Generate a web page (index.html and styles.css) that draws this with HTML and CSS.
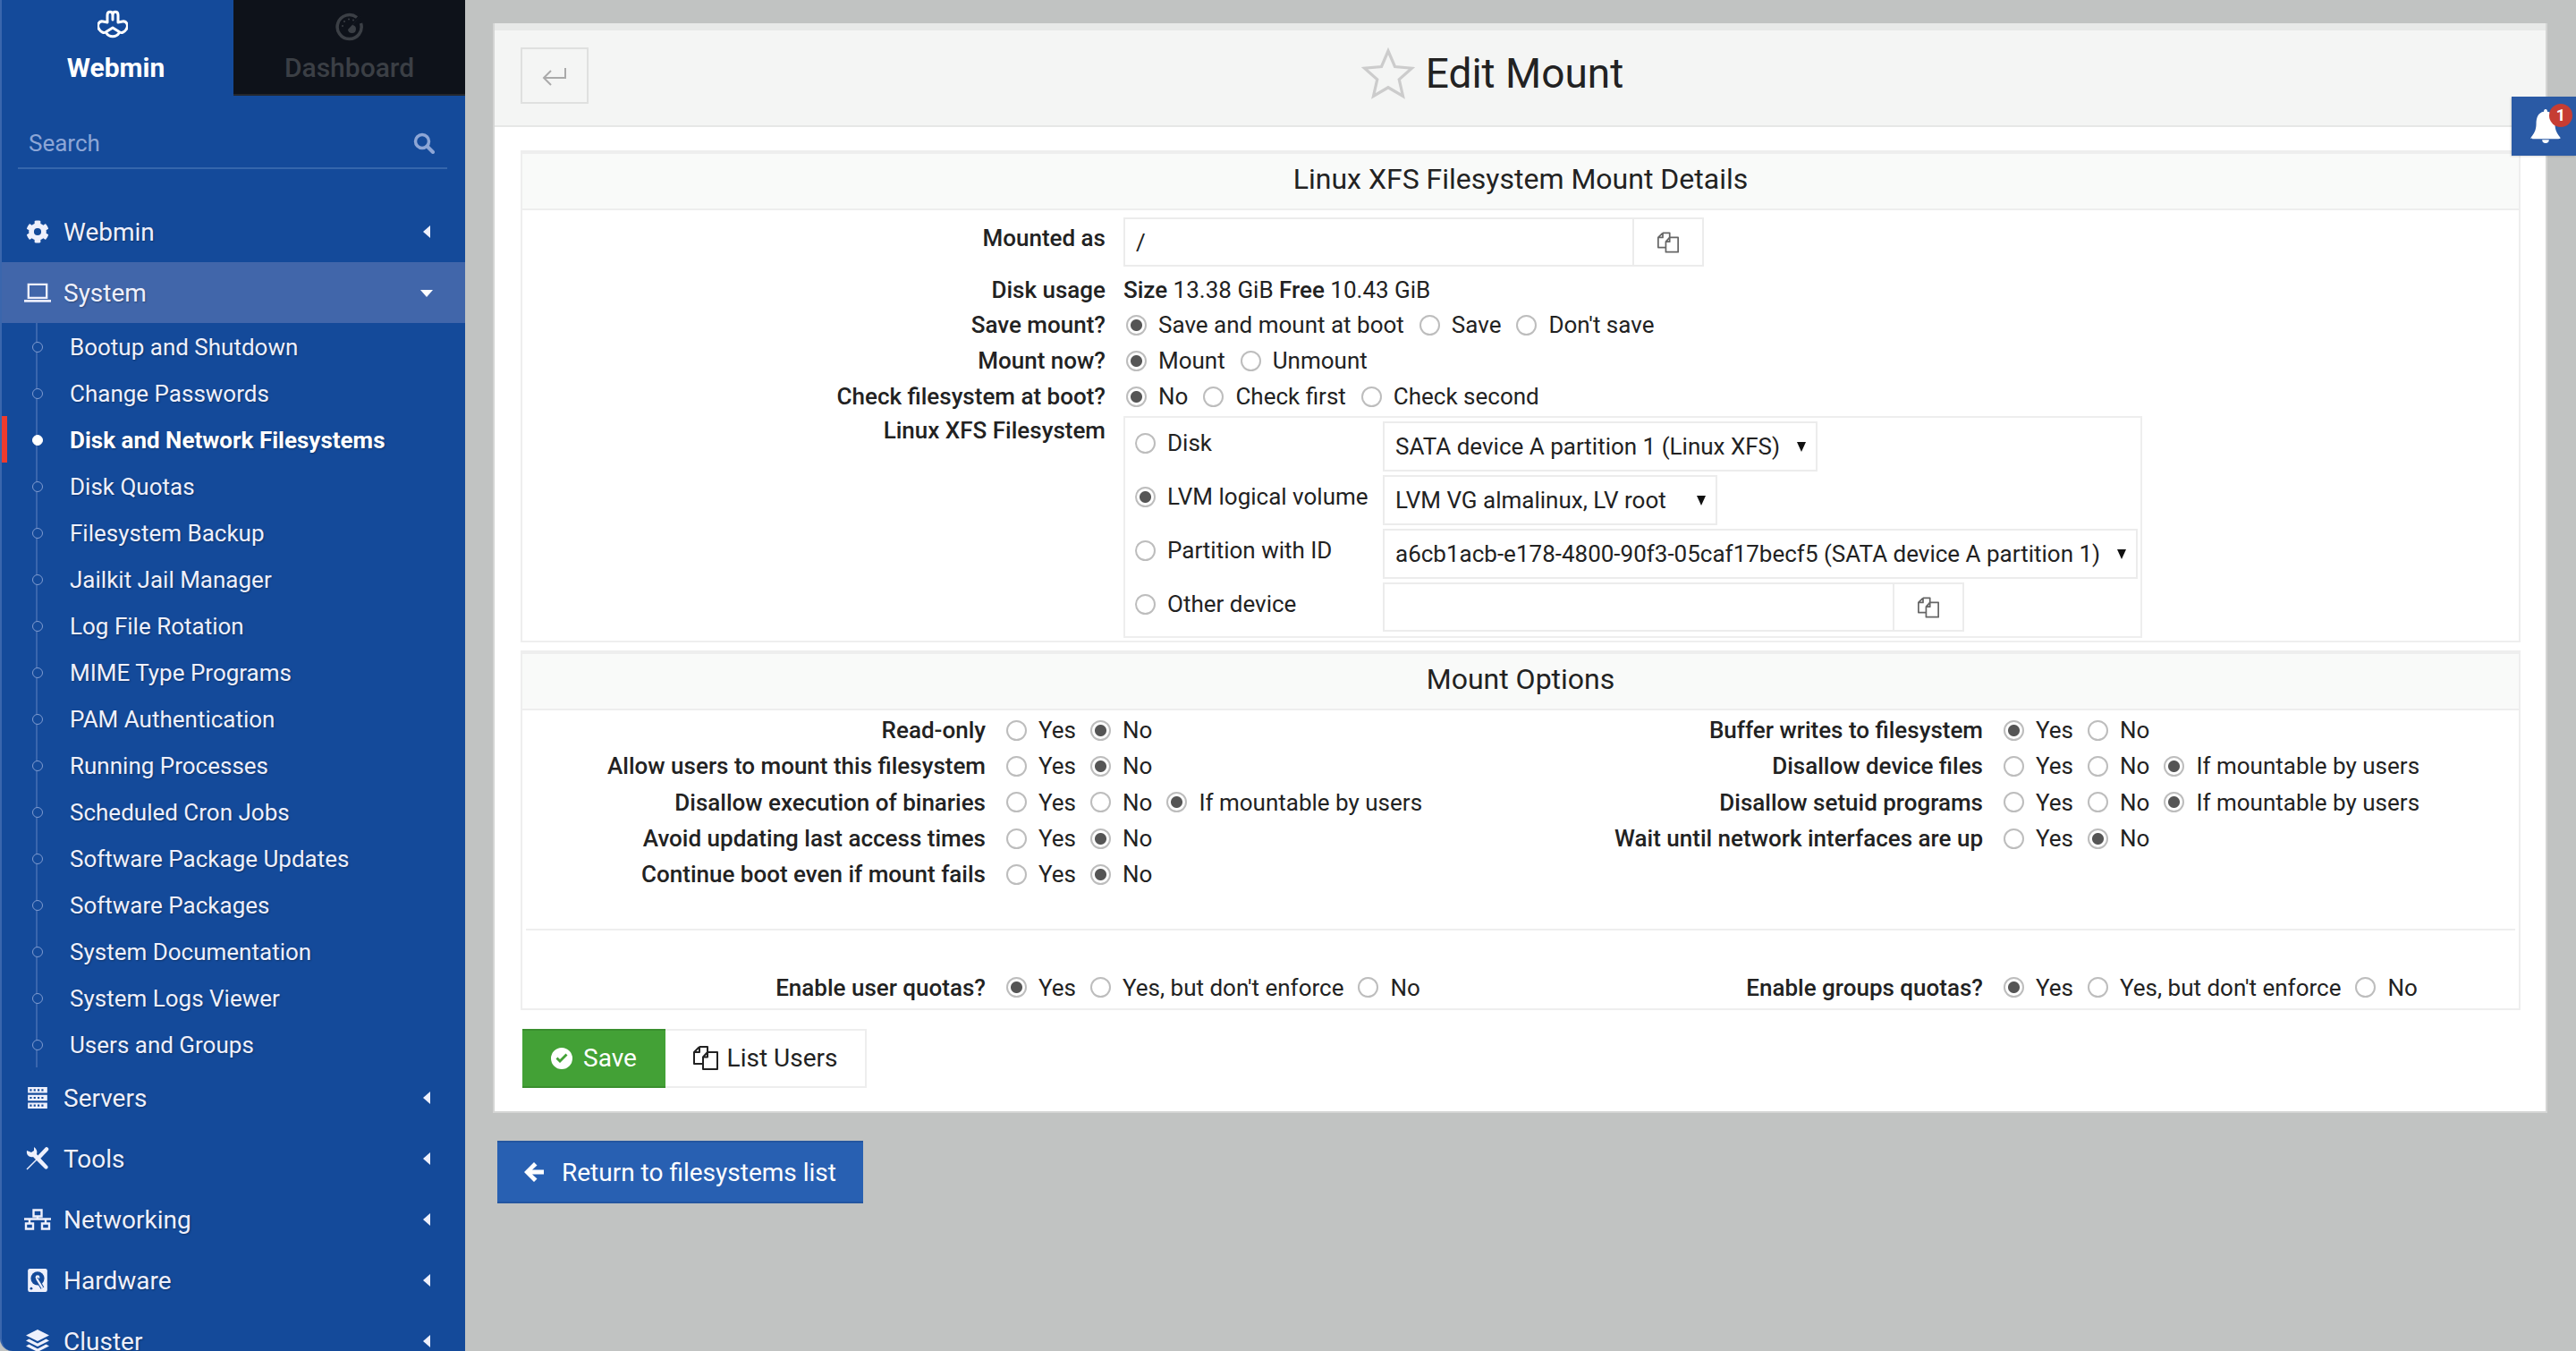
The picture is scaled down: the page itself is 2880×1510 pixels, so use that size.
FILE: index.html
```html
<!DOCTYPE html>
<html lang="en">
<head>
    <meta charset="UTF-8">
    <title>Edit Mount</title>
    <link rel="stylesheet" href="styles.css">
</head>
<body>
    <svg class="defs" width="0" height="0">
        <symbol id="copy" viewBox="0 0 28 27">
            <path d="M7 1H16V7M7 1V7H1M7 1L1 7V20H11" fill="none" stroke="currentColor" stroke-width="2" stroke-linejoin="round"/>
            <path d="M16 7H27V26H11V12.500ZM16 7V12.500H11" fill="none" stroke="currentColor" stroke-width="2" stroke-linejoin="round"/>
        </symbol>
        <symbol id="left" viewBox="0 0 8 14"><path d="M8 0V14L0 7Z" fill="currentColor"/></symbol>
    </svg>

    <aside class="sidebar">
        <div class="tabs">
            <div class="tab tab-active">
                <svg class="tab-icon" viewBox="0 0 34 32"><path d="M11 14V6C11 1 17 1 17 6C17 1 23 1 23 6V14L28 13C33 12 35 18 32 22C30 25 27 26 25 25L17 20L9 25C7 26 4 25 2 22C-1 18 1 12 6 13ZM17 6V11M10 26C13 31 21 31 24 26" fill="none" stroke="#fff" stroke-width="3" stroke-linejoin="round" stroke-linecap="round"/></svg>
                <span>Webmin</span>
            </div>
            <div class="tab tab-dark">
                <svg class="tab-icon" viewBox="0 0 32 32">
                    <path d="M24 5.500A13.500 13.500 0 1 0 28.500 12" fill="none" stroke="#3b3f45" stroke-width="3.500"/>
                    <path d="M29 3L19 14A4.500 4.500 0 1 1 14 19Z" fill="#3b3f45"/>
                    <path d="M8 15V15.100M10 10V10.100M15 7.500V7.600M20 8.500V8.600" stroke="#3b3f45" stroke-width="2" stroke-linecap="round"/>
                </svg>
                <span>Dashboard</span>
            </div>
        </div>

        <div class="search">
            <span>Search</span>
            <svg class="search-icon" viewBox="0 0 24 24"><circle cx="10" cy="10" r="7.500" fill="none" stroke="currentColor" stroke-width="3.500"/><path d="M15.500 15.500L22 22" stroke="currentColor" stroke-width="4" stroke-linecap="round"/></svg>
        </div>

        <nav class="menu">
            <div class="menu-row">
                <svg class="menu-icon" viewBox="0 0 512 512"><path fill="currentColor" d="M487 316l-42-25a190 190 0 0 0 0-70l42-25c5-3 7-8 6-14-11-35-30-67-54-94-4-4-10-5-15-2l-42 25c-18-15-38-27-60-34V28c0-6-4-11-10-12-36-8-74-8-112 0-6 1-10 6-10 12v49c-22 8-42 20-60 34L88 86c-5-3-11-2-15 2-24 27-43 59-54 94-2 6 1 11 6 14l42 25a190 190 0 0 0 0 70l-42 25c-5 3-8 8-6 14 11 35 30 67 54 94 4 4 10 5 15 2l42-25c18 15 38 27 60 34v49c0 6 4 11 10 12 36 8 74 8 112 0 6-1 10-6 10-12v-49c22-8 42-20 60-34l42 25c5 3 11 2 15-2 24-27 43-59 54-94 1-6-1-11-6-14zM256 336a80 80 0 1 1 0-160 80 80 0 0 1 0 160z"/></svg>
                <span class="menu-label">Webmin</span>
                <svg class="caret"><use href="#left"/></svg>
            </div>
            <div class="menu-row menu-open">
                <svg class="menu-icon" viewBox="0 0 28 24"><path d="M4.500 3.500H23.500V17.500H4.500Z" fill="none" stroke="currentColor" stroke-width="2.200"/><path d="M0 19.500H28V22H0Z" fill="currentColor"/></svg>
                <span class="menu-label">System</span>
                <span class="caret-down"></span>
            </div>
            <ul class="submenu">
                <li>Bootup and Shutdown</li>
                <li>Change Passwords</li>
                <li class="current">Disk and Network Filesystems</li>
                <li>Disk Quotas</li>
                <li>Filesystem Backup</li>
                <li>Jailkit Jail Manager</li>
                <li>Log File Rotation</li>
                <li>MIME Type Programs</li>
                <li>PAM Authentication</li>
                <li>Running Processes</li>
                <li>Scheduled Cron Jobs</li>
                <li>Software Package Updates</li>
                <li>Software Packages</li>
                <li>System Documentation</li>
                <li>System Logs Viewer</li>
                <li>Users and Groups</li>
            </ul>
            <div class="menu-row">
                <svg class="menu-icon" viewBox="0 0 24 24"><path fill="currentColor" fill-rule="evenodd" d="M2 1H22V7H2ZM4 3V5H6V3ZM8 3V5H10V3ZM12 3V5H14V3ZM16 3V5H18V3ZM2 9H22V15H2ZM4 11V13H6V11ZM8 11V13H10V11ZM12 11V13H14V11ZM16 11V13H18V11ZM2 17H22V23H2ZM4 19V21H6V19ZM8 19V21H10V19ZM12 19V21H14V19ZM16 19V21H18V19Z"/></svg>
                <span class="menu-label">Servers</span>
                <svg class="caret"><use href="#left"/></svg>
            </div>
            <div class="menu-row">
                <svg class="menu-icon" viewBox="0 0 26 26">
                    <path d="M1 25L15 11" stroke="currentColor" stroke-width="1.500"/>
                    <path d="M15 11L23 2.500" stroke="currentColor" stroke-width="4.500" stroke-linecap="round"/>
                    <path fill="currentColor" d="M1 4C0 9 4 12 8 11L21 24C23 26 26 23 24 21L12 8C13 5 12 2 9 0L9 4L6 6Z"/>
                </svg>
                <span class="menu-label">Tools</span>
                <svg class="caret"><use href="#left"/></svg>
            </div>
            <div class="menu-row">
                <svg class="menu-icon" viewBox="0 0 30 24"><path d="M10.500 1.500H19.500V8.500H10.500ZM2 16.500H10V22.500H2ZM20 16.500H28V22.500H20Z" fill="none" stroke="currentColor" stroke-width="2.400"/><path d="M0 11.500H30M15 8.500V11.500M6 11.500V16.500M24 11.500V16.500" fill="none" stroke="currentColor" stroke-width="2.400"/></svg>
                <span class="menu-label">Networking</span>
                <svg class="caret"><use href="#left"/></svg>
            </div>
            <div class="menu-row">
                <svg class="menu-icon" viewBox="0 0 24 24">
                    <rect x="2" y="0" width="20" height="24" rx="2" fill="currentColor"/>
                    <circle cx="12" cy="10" r="7" fill="#144a9a"/>
                    <circle cx="12" cy="9" r="2.200" fill="#eef0fc"/>
                    <path d="M11 10L17 20" stroke="#144a9a" stroke-width="4"/>
                    <path d="M11 10L17 20" stroke="#eef0fc" stroke-width="2"/>
                    <circle cx="5.500" cy="20.500" r="1.300" fill="#144a9a"/>
                </svg>
                <span class="menu-label">Hardware</span>
                <svg class="caret"><use href="#left"/></svg>
            </div>
            <div class="menu-row">
                <svg class="menu-icon" viewBox="0 0 28 26"><path fill="currentColor" d="M14 0L27 6.500L14 13L1 6.500ZM4.500 10.500L14 15.500L23.500 10.500L27 12.500L14 19L1 12.500ZM4.500 16.500L14 21.500L23.500 16.500L27 18.500L14 25L1 18.500Z"/></svg>
                <span class="menu-label">Cluster</span>
                <svg class="caret"><use href="#left"/></svg>
            </div>
        </nav>
    </aside>

    <main class="main">
        <section class="panel">
            <header class="panel-head">
                <button class="back-btn">
                    <svg viewBox="0 0 30 24"><path d="M27 3V14H4M11 6L3 14L11 22" fill="none" stroke="#aaa" stroke-width="2"/></svg>
                </button>
                <div class="page-title">
                    <svg class="star" viewBox="0 0 24 24"><path d="M12 2L15 9L22.600 9.700L16.900 14.700L18.600 22.200L12 18.300L5.400 22.200L7.100 14.700L1.400 9.700L9 9Z" fill="none" stroke="#ccc" stroke-width="1.300"/></svg>
                    <h1>Edit Mount</h1>
                </div>
            </header>

            <div class="panel-body">
                <div class="box">
                    <h2 class="box-title">Linux XFS Filesystem Mount Details</h2>
                    <div class="box-main">
                        <div class="field field-tall">
                            <label class="field-label">Mounted as</label>
                            <div class="input-group group-wide">
                                <input class="text-input" type="text" value="/">
                                <span class="input-btn"><svg><use href="#copy"/></svg></span>
                            </div>
                        </div>
                        <div class="field field-usage">
                            <label class="field-label">Disk usage</label>
                            <div><b>Size</b> 13.38 GiB <b>Free</b> 10.43 GiB</div>
                        </div>
                        <div class="field">
                            <label class="field-label">Save mount?</label>
                            <div class="radios">
                                <input class="radio" type="radio" name="save" checked><span>Save and mount at boot</span>
                                <input class="radio" type="radio" name="save"><span>Save</span>
                                <input class="radio" type="radio" name="save"><span>Don't save</span>
                            </div>
                        </div>
                        <div class="field">
                            <label class="field-label">Mount now?</label>
                            <div class="radios">
                                <input class="radio" type="radio" name="now" checked><span>Mount</span>
                                <input class="radio" type="radio" name="now"><span>Unmount</span>
                            </div>
                        </div>
                        <div class="field">
                            <label class="field-label">Check filesystem at boot?</label>
                            <div class="radios">
                                <input class="radio" type="radio" name="check" checked><span>No</span>
                                <input class="radio" type="radio" name="check"><span>Check first</span>
                                <input class="radio" type="radio" name="check"><span>Check second</span>
                            </div>
                        </div>
                        <div class="field field-fs">
                            <label class="field-label">Linux XFS Filesystem</label>
                            <div class="fs-box">
                                <div class="fs-row">
                                    <div class="fs-label"><input class="radio" type="radio" name="dev"><span>Disk</span></div>
                                    <div class="select select-disk"><span>SATA device A partition 1 (Linux XFS)</span><i></i></div>
                                </div>
                                <div class="fs-row">
                                    <div class="fs-label"><input class="radio" type="radio" name="dev" checked><span>LVM logical volume</span></div>
                                    <div class="select select-lvm"><span>LVM VG almalinux, LV root</span><i></i></div>
                                </div>
                                <div class="fs-row">
                                    <div class="fs-label"><input class="radio" type="radio" name="dev"><span>Partition with ID</span></div>
                                    <div class="select select-id"><span>a6cb1acb-e178-4800-90f3-05caf17becf5 (SATA device A partition 1)</span><i></i></div>
                                </div>
                                <div class="fs-row">
                                    <div class="fs-label"><input class="radio" type="radio" name="dev"><span>Other device</span></div>
                                    <div class="input-group group-other">
                                        <input class="text-input" type="text">
                                        <span class="input-btn"><svg><use href="#copy"/></svg></span>
                                    </div>
                                </div>
                            </div>
                        </div>
                    </div>
                </div>

                <div class="box box-options">
                    <h2 class="box-title">Mount Options</h2>
                    <div class="opts">
                        <label>Read-only</label>
                        <div class="radios"><input class="radio" type="radio" name="o1"><span>Yes</span><input class="radio" type="radio" name="o1" checked><span>No</span></div>
                        <label>Buffer writes to filesystem</label>
                        <div class="radios"><input class="radio" type="radio" name="o2" checked><span>Yes</span><input class="radio" type="radio" name="o2"><span>No</span></div>

                        <label>Allow users to mount this filesystem</label>
                        <div class="radios"><input class="radio" type="radio" name="o3"><span>Yes</span><input class="radio" type="radio" name="o3" checked><span>No</span></div>
                        <label>Disallow device files</label>
                        <div class="radios"><input class="radio" type="radio" name="o4"><span>Yes</span><input class="radio" type="radio" name="o4"><span>No</span><input class="radio" type="radio" name="o4" checked><span>If mountable by users</span></div>

                        <label>Disallow execution of binaries</label>
                        <div class="radios"><input class="radio" type="radio" name="o5"><span>Yes</span><input class="radio" type="radio" name="o5"><span>No</span><input class="radio" type="radio" name="o5" checked><span>If mountable by users</span></div>
                        <label>Disallow setuid programs</label>
                        <div class="radios"><input class="radio" type="radio" name="o6"><span>Yes</span><input class="radio" type="radio" name="o6"><span>No</span><input class="radio" type="radio" name="o6" checked><span>If mountable by users</span></div>

                        <label>Avoid updating last access times</label>
                        <div class="radios"><input class="radio" type="radio" name="o7"><span>Yes</span><input class="radio" type="radio" name="o7" checked><span>No</span></div>
                        <label>Wait until network interfaces are up</label>
                        <div class="radios"><input class="radio" type="radio" name="o8"><span>Yes</span><input class="radio" type="radio" name="o8" checked><span>No</span></div>

                        <label>Continue boot even if mount fails</label>
                        <div class="radios"><input class="radio" type="radio" name="o9"><span>Yes</span><input class="radio" type="radio" name="o9" checked><span>No</span></div>
                    </div>
                    <hr class="divider">
                    <div class="opts opts-quota">
                        <label>Enable user quotas?</label>
                        <div class="radios"><input class="radio" type="radio" name="q1" checked><span>Yes</span><input class="radio" type="radio" name="q1"><span>Yes, but don't enforce</span><input class="radio" type="radio" name="q1"><span>No</span></div>
                        <label>Enable groups quotas?</label>
                        <div class="radios"><input class="radio" type="radio" name="q2" checked><span>Yes</span><input class="radio" type="radio" name="q2"><span>Yes, but don't enforce</span><input class="radio" type="radio" name="q2"><span>No</span></div>
                    </div>
                </div>

                <div class="actions">
                    <button class="btn btn-save">
                        <svg viewBox="0 0 24 24"><path fill="#fff" fill-rule="evenodd" d="M12 0A12 12 0 1 1 12 24A12 12 0 1 1 12 0ZM5.500 12.500L10 17L18.500 8.500L16.500 6.500L10 13L7.500 10.500Z"/></svg>
                        Save
                    </button>
                    <button class="btn btn-list"><svg><use href="#copy"/></svg>List Users</button>
                </div>
            </div>
        </section>

        <button class="btn-return">
            <svg viewBox="0 0 24 24"><path fill="#fff" d="M12 1L15.500 4.500L10 9.500H23V14.500H10L15.500 19.500L12 23L1 12Z"/></svg>
            Return to filesystems list
        </button>
    </main>

    <div class="notify">
        <svg viewBox="0 0 36 40"><path fill="#fff" d="M18 0C19.500 0 20 1 20 3C27 4 29 11 29 17C29 25 32 29 35 33C36 35 35 35 33 35H3C1 35 0 35 1 33C4 29 7 25 7 17C7 11 9 4 16 3C16 1 16.500 0 18 0ZM14 36H22A4 4 0 0 1 14 36Z"/></svg>
        <span class="badge">1</span>
    </div>
</body>
</html>
```

FILE: styles.css
```css
* {
    box-sizing: border-box;
}
html, body {
    margin: 0;
    height: 1510px;
    overflow: hidden;
}
body {
    display: flex;
    background-color: #c1c3c2;
    font-family: Roboto, "Liberation Sans", sans-serif;
    font-size: 26px;
    color: #222;
}
.defs {
    position: absolute;
}
b, label {
    font-weight: 500;
}

/* sidebar */
.sidebar {
    position: relative;
    width: 520px;
    height: 1510px;
    flex: none;
    background-color: #144a9a;
    border-left: 2px solid #3a66ad;
    border-bottom-left-radius: 14px;
    overflow: hidden;
    color: #eef0fc;
}
.tabs {
    display: flex;
    height: 107px;
}
.tab {
    width: 259px;
    display: flex;
    flex-direction: column;
    align-items: center;
    font-size: 30px;
    padding-top: 11px;
}
.tab-active {
    color: #fff;
    font-weight: 700;
    padding-right: 4px;
}
.tab-dark {
    background-color: #0e121a;
    border-bottom: 2px solid #24272c;
    color: #3b3f45;
    font-weight: 500;
}
.tab-icon {
    width: 34px;
    height: 32px;
    margin-bottom: 15px;
    margin-left: -7px;
}
.tab-dark .tab-icon {
    margin-top: 3px;
    margin-bottom: 12px;
    margin-left: 0;
    width: 32px;
    height: 32px;
}
.search {
    display: flex;
    align-items: center;
    justify-content: space-between;
    height: 60px;
    margin: 22px 20px 0 18px;
    padding: 4px 14px 0 12px;
    border-bottom: 2px solid #3566ac;
    color: #8da6d6;
    font-size: 26px;
}
.search-icon {
    width: 24px;
    height: 24px;
}
.menu {
    margin-top: 36px;
}
.menu-row {
    display: flex;
    align-items: center;
    height: 68px;
    padding-left: 25px;
    position: relative;
    font-size: 28px;
    text-shadow: 1px 1px 2px rgba(0, 0, 0, .3);
}
.menu-open {
    background-color: #4166aa;
}
.menu-icon {
    width: 30px;
    height: 26px;
    flex: none;
}
.menu-label {
    margin-left: 14px;
}
.caret {
    position: absolute;
    right: 39px;
    top: 27px;
    width: 8px;
    height: 14px;
}
.caret-down {
    position: absolute;
    right: 36px;
    top: 31px;
    border-left: 7px solid transparent;
    border-right: 7px solid transparent;
    border-top: 8px solid #fff;
}
.submenu {
    list-style: none;
    margin: 0;
    padding: 0;
    position: relative;
}
.submenu::before {
    content: "";
    position: absolute;
    left: 38px;
    top: 0;
    bottom: 0;
    width: 2px;
    background-color: #3a66ad;
}
.submenu li {
    position: relative;
    height: 52px;
    line-height: 54px;
    padding-left: 76px;
    font-size: 26px;
    text-shadow: 1px 1px 2px rgba(0, 0, 0, .3);
}
.submenu li::before {
    content: "";
    position: absolute;
    left: 34px;
    top: 21px;
    width: 10px;
    height: 10px;
    border-radius: 50%;
    border: 1.500px solid #7f9bd0;
    background-color: #144a9a;
}
.submenu li.current {
    font-weight: 700;
    color: #fff;
}
.submenu li.current::before {
    background-color: #fff;
    border-color: #fff;
}
.submenu li.current::after {
    content: "";
    position: absolute;
    left: -2px;
    top: 0;
    width: 8px;
    height: 52px;
    background-color: #ee3b2d;
}

/* content */
.main {
    flex: 1;
    padding: 26px 32px 0 31px;
}
.panel {
    width: 2297px;
    height: 1218px;
    background-color: #fff;
    border: 2px solid #d4d5d4;
    border-top: 0;
}
.panel-head {
    position: relative;
    display: flex;
    align-items: center;
    justify-content: center;
    height: 116px;
    padding-top: 8px;
    background-color: #f4f5f4;
    border-top: 8px solid #e8e9e8;
    border-bottom: 2px solid #e6e7e6;
}
.back-btn {
    position: absolute;
    left: 29px;
    top: 19px;
    width: 76px;
    height: 63px;
    padding: 0;
    background: none;
    border: 2px solid #dfe0df;
    display: flex;
    align-items: center;
    justify-content: center;
}
.back-btn svg {
    width: 30px;
    height: 24px;
}
.page-title {
    display: flex;
    align-items: center;
    margin-left: -62px;
    margin-top: -18px;
}
.star {
    width: 60px;
    height: 60px;
    margin-right: 12px;
}
.page-title h1 {
    margin: 0;
    font-size: 46px;
    font-weight: 400;
    color: #222;
}
.panel-body {
    padding: 26px 28px 0 29px;
}
.box {
    width: 2236px;
    border: 2px solid #eee;
    border-top: 4px solid #eee;
}
.box-options {
    margin-top: 9px;
}
.box-title {
    margin: 0;
    height: 63px;
    line-height: 56px;
    text-align: center;
    font-size: 32px;
    font-weight: 400;
    background-color: #f9faf9;
    border-bottom: 2px solid #eee;
    color: #222;
}
.box-main {
    padding-top: 8px;
    padding-bottom: 3px;
}
.field {
    display: grid;
    grid-template-columns: 652px 1fr;
    column-gap: 20px;
    align-items: center;
    height: 40px;
}
.field-label {
    text-align: right;
}
.field-tall {
    height: 55px;
    margin-bottom: 7px;
}
.field-tall .field-label {
    align-self: start;
    line-height: 46px;
}
.field-usage {
    height: 38px;
}
.field-fs {
    height: 248px;
    margin-top: 2px;
    align-items: start;
}
.field-fs .field-label {
    line-height: 32px;
}
.radios {
    display: flex;
    align-items: center;
}
.radio {
    appearance: none;
    width: 23px;
    height: 23px;
    flex: none;
    margin: 0 13px 0 3px;
    border-radius: 50%;
    border: 2px solid #bdbdbd;
    background-color: #fff;
}
.radio:checked {
    background: radial-gradient(circle, #555 0, #555 6px, #fff 7px);
}
.radios span {
    margin-right: 14px;
}
.input-group {
    display: flex;
    height: 55px;
    border: 2px solid #ececec;
}
.group-wide {
    width: 649px;
}
.group-other {
    width: 650px;
}
.text-input {
    flex: 1;
    min-width: 0;
    border: none;
    outline: none;
    padding: 0 12px;
    font-family: inherit;
    font-size: 26px;
    color: #222;
    background: none;
}
.input-btn {
    width: 78px;
    border-left: 2px solid #ececec;
    display: flex;
    align-items: center;
    justify-content: center;
    color: #666;
    padding-top: 1px;
}
.input-btn svg {
    width: 24px;
    height: 24px;
}
.fs-box {
    width: 1139px;
    height: 248px;
    border: 2px solid #eee;
    padding-top: 4px;
}
.fs-row {
    display: flex;
    height: 60px;
}
.fs-label {
    display: flex;
    align-items: center;
    width: 288px;
    height: 48px;
    padding-left: 8px;
    flex: none;
}
.select {
    display: flex;
    align-items: center;
    justify-content: space-between;
    height: 56px;
    border: 2px solid #ececec;
    padding: 0 11px 0 12px;
    white-space: nowrap;
}
.select i {
    border-left: 5px solid transparent;
    border-right: 5px solid transparent;
    border-top: 11px solid #111;
}
.select-disk {
    width: 486px;
}
.select-lvm {
    width: 374px;
}
.select-id {
    width: 844px;
}
.opts {
    display: grid;
    grid-template-columns: 518px 590px 479px 1fr;
    column-gap: 23px;
    grid-auto-rows: 40.300px;
    align-items: center;
    padding-top: 2px;
}
.opts label {
    text-align: right;
}
.opts .radio {
    margin-left: 0;
    margin-right: 13px;
}
.opts .radios span {
    margin-right: 16px;
}
.opts-quota {
    margin-top: 41px;
    margin-bottom: 3px;
}
.divider {
    margin: 41px 4px 0 4px;
    border: none;
    border-top: 2px solid #eee;
}
.actions {
    display: flex;
    margin-top: 21px;
    margin-left: 2px;
}
.btn {
    display: flex;
    align-items: center;
    height: 66px;
    font-family: inherit;
    font-size: 28px;
    padding: 0;
}
.btn-save {
    width: 160px;
    justify-content: center;
    gap: 12px;
    background-color: #43a136;
    border: none;
    border-top: 2px solid #3a8f2e;
    border-bottom: 2px solid #3a8f2e;
    color: #fff;
}
.btn-save svg {
    width: 24px;
    height: 24px;
}
.btn-list {
    width: 225px;
    justify-content: center;
    gap: 10px;
    background-color: #fff;
    border: 2px solid #eee;
    border-left: none;
    color: #222;
}
.btn-list svg {
    width: 28px;
    height: 27px;
}
.btn-return {
    display: flex;
    align-items: center;
    gap: 19px;
    width: 409px;
    height: 70px;
    margin: 31px 0 0 5px;
    padding: 0 0 0 29px;
    background-color: #2860b2;
    border: none;
    border-top: 2px solid #2456a0;
    border-bottom: 2px solid #2456a0;
    color: #fff;
    font-family: inherit;
    font-size: 28px;
}
.btn-return svg {
    width: 24px;
    height: 26px;
}

/* notification tab */
.notify {
    position: absolute;
    left: 2808px;
    top: 108px;
    width: 72px;
    height: 66px;
    background-color: #2a5aa5;
    box-shadow: -1px 1px 2px rgba(0, 0, 0, .15);
}
.notify svg {
    position: absolute;
    left: 20px;
    top: 14px;
    width: 36px;
    height: 38px;
}
.badge {
    position: absolute;
    left: 42px;
    top: 8px;
    width: 26px;
    height: 26px;
    border-radius: 50%;
    background-color: #c63d33;
    color: #fff;
    font-size: 18px;
    font-weight: 700;
    line-height: 26px;
    text-align: center;
}
```
